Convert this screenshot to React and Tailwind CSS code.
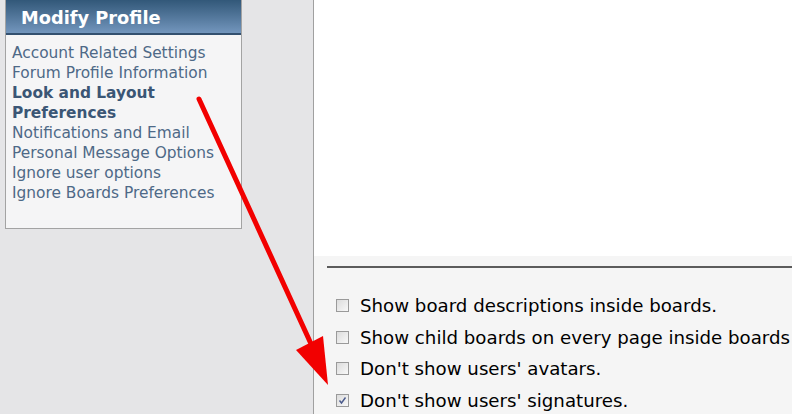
const links = [
  { label: 'Account Related Settings' },
  { label: 'Forum Profile Information' },
  { label: 'Look and Layout Preferences', active: true },
  { label: 'Notifications and Email' },
  { label: 'Personal Message Options' },
  { label: 'Ignore user options' },
  { label: 'Ignore Boards Preferences' },
];

const options = [
  { label: 'Show board descriptions inside boards.', checked: false },
  { label: 'Show child boards on every page inside boards', checked: false },
  { label: "Don't show users' avatars.", checked: false },
  { label: "Don't show users' signatures.", checked: true },
];

function Box({ checked }) {
  return (
    <span className="flex h-[13px] w-[13px] shrink-0 items-center justify-center border border-[#9a9a9a] bg-gradient-to-br from-[#dcdcdc] to-[#f8f8f8]">
      {checked ? (
        <svg width="9" height="9" viewBox="0 0 9 9">
          <path d="M1.5 4.5 L3.5 7 L7.5 1.5" fill="none" stroke="#4a5a8c" strokeWidth="1.4" />
        </svg>
      ) : null}
    </span>
  );
}

export default function App() {
  return (
    <div className="relative h-[414px] w-[792px] overflow-hidden bg-[#e5e5e7] font-['DejaVu_Sans',Verdana,sans-serif]">
      <div className="flex h-full">
        <div className="w-[313px] shrink-0 pl-[5px]">
          <div className="h-[229px] w-[237px] border border-t-0 border-[#a3a3a3] bg-[#f5f5f6]">
            <div className="h-[35px] border-b-2 border-[#33506f] bg-gradient-to-b from-[#325879] to-[#7396bd] pl-[15px] pt-[5px] text-[17.8px] font-bold text-white">
              Modify Profile
            </div>
            <ul className="pl-[6px] pt-[8px] text-[15.4px] leading-[20px]">
              {links.map((l) => (
                <li
                  key={l.label}
                  className={l.active ? 'w-[160px] font-bold text-[#3b5675]' : 'text-[#4e6987]'}
                >
                  {l.label}
                </li>
              ))}
            </ul>
          </div>
        </div>
        <div className="flex flex-1 flex-col overflow-hidden border-l border-[#a0a0a0]">
          <div className="h-[256px] shrink-0 bg-white" />
          <div className="flex-1 bg-[#f5f5f5] pl-[13px] pt-[10px]">
            <div className="h-[2px] bg-[#5c5c5c]" />
            <ul className="whitespace-nowrap pl-[9px] pt-[22px] text-[18.2px] text-black">
              {options.map((o) => (
                <li key={o.label} className="flex h-[31.6px] items-center gap-[11px]">
                  <Box checked={o.checked} />
                  <span>{o.label}</span>
                </li>
              ))}
            </ul>
          </div>
        </div>
      </div>
      <svg className="pointer-events-none absolute left-0 top-0" width="792" height="414">
        <line x1="199" y1="99" x2="312" y2="346" stroke="#f20000" strokeWidth="5" strokeLinecap="round" />
        <polygon points="328,385 296,350 323,336" fill="#f20000" />
      </svg>
    </div>
  );
}
